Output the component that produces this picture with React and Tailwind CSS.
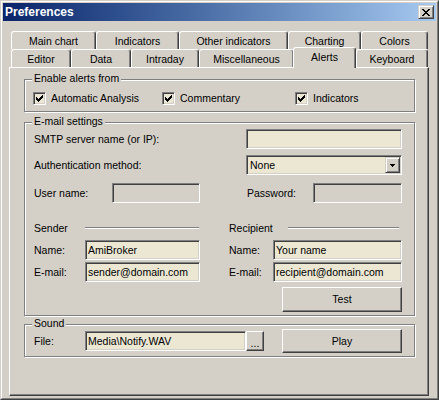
import React from "react";

const SUNKEN =
  "border border-t-[#808080] border-l-[#808080] border-b-white border-r-white shadow-[inset_1px_1px_0_#404040,inset_-1px_-1px_0_#d4d0c8]";
const RAISED =
  "border border-t-white border-l-white border-b-[#404040] border-r-[#404040] shadow-[inset_-1px_-1px_0_#808080]";
const RAISED2 =
  "border border-t-[#d4d0c8] border-l-[#d4d0c8] border-b-[#404040] border-r-[#404040] shadow-[inset_1px_1px_0_#ffffff,inset_-1px_-1px_0_#808080]";

function Field({ className = "", children, disabled }) {
  return (
    <div
      className={`h-[20px] shrink-0 flex items-center pl-[2px] whitespace-nowrap overflow-hidden ${
        disabled ? "bg-[#d4d0c8]" : "bg-[#ebe7d3]"
      } ${SUNKEN} ${className}`}
    >
      {children}
    </div>
  );
}

function Button({ className = "", children }) {
  return (
    <div
      className={`shrink-0 flex items-center justify-center bg-[#d4d0c8] ${RAISED} ${className}`}
    >
      {children}
    </div>
  );
}

function Check({ label, className = "" }) {
  return (
    <div className={`flex items-center shrink-0 ${className}`}>
      <div
        className={`w-[13px] h-[13px] bg-[#ebe7d3] flex items-center justify-center shrink-0 ${SUNKEN}`}
      >
        <svg width="7" height="7" viewBox="0 0 7 7" shapeRendering="crispEdges">
          <path
            d="M6 0h1v1h-1z M5 1h2v1h-2z M0 2h1v1h-1z M4 2h3v1h-3z M0 3h2v1h-2z M3 3h3v1h-3z M0 4h5v1h-5z M1 5h3v1h-3z M2 6h1v1h-1z"
            fill="#000"
          />
        </svg>
      </div>
      <span className="ml-[5px] whitespace-nowrap">{label}</span>
    </div>
  );
}

function Group({ label, className = "", children }) {
  return (
    <div
      className={`relative border border-[#808080] shadow-[inset_1px_1px_0_#ffffff,1px_1px_0_#ffffff] ${className}`}
    >
      <span className="absolute left-[7px] top-[-8px] px-[2px] bg-[#d4d0c8] leading-[13px] whitespace-nowrap">
        {label}
      </span>
      {children}
    </div>
  );
}

function Etched({ className = "" }) {
  return (
    <div
      className={`shrink-0 h-[2px] border-t border-t-[#808080] border-b border-b-white ${className}`}
    />
  );
}

const TAB =
  "shrink-0 h-[18px] pt-[2px] flex items-center justify-center whitespace-nowrap bg-[#d4d0c8] border-t border-l border-r border-t-white border-l-white border-r-[#404040] rounded-t-[3px] shadow-[inset_-1px_0_0_#808080]";

function Label({ className = "", children }) {
  return <span className={`shrink-0 whitespace-nowrap ${className}`}>{children}</span>;
}

export default function App() {
  return (
    <div className="w-[439px] h-[400px] bg-[#d4d0c8] font-['Liberation_Sans',Arial,sans-serif] text-[10.5px] leading-[13px] text-black border border-t-[#d4d0c8] border-l-[#d4d0c8] border-b-[#404040] border-r-[#404040] overflow-hidden">
      <div className="h-full border border-t-white border-l-white border-b-[#808080] border-r-[#808080] p-[1px]">
        {/* Title bar */}
        <div className="h-[18px] flex items-center justify-between bg-linear-to-r from-[#0a246a] to-[#a6caf0] pl-[2px] pr-[2px]">
          <span className="text-white font-bold text-[12px] leading-[14px]">Preferences</span>
          <div
            className={`w-[16px] h-[14px] bg-[#d4d0c8] flex items-center justify-center ${RAISED2}`}
          >
            <svg width="8" height="7" viewBox="0 0 8 7" shapeRendering="crispEdges">
              <path
                d="M0 0h2v1h-2z M6 0h2v1h-2z M1 1h2v1h-2z M5 1h2v1h-2z M2 2h4v1h-4z M3 3h2v1h-2z M2 4h4v1h-4z M1 5h2v1h-2z M5 5h2v1h-2z M0 6h2v1h-2z M6 6h2v1h-2z"
                fill="#000"
              />
            </svg>
          </div>
        </div>

        {/* Tabs row 1 */}
        <div className="flex ml-[8px] mt-[10px] h-[18px]">
          <div className={`${TAB} w-[85px]`}>Main chart</div>
          <div className={`${TAB} w-[83px]`}>Indicators</div>
          <div className={`${TAB} w-[109px]`}>Other indicators</div>
          <div className={`${TAB} w-[73px]`}>Charting</div>
          <div className={`${TAB} w-[67px]`}>Colors</div>
        </div>
        {/* Tabs row 2 */}
        <div className="flex items-start ml-[8px] h-[18px]">
          <div className={`${TAB} w-[60px]`}>Editor</div>
          <div className={`${TAB} w-[60px]`}>Data</div>
          <div className={`${TAB} w-[68px]`}>Intraday</div>
          <div className={`${TAB} w-[95px]`}>Miscellaneous</div>
          <div className="relative z-10 shrink-0 w-[63px] h-[21px] -ml-[1px] -mt-[2px] pb-[1px] flex items-center justify-center bg-[#d4d0c8] border-t border-l border-r border-t-white border-l-white border-r-[#404040] rounded-t-[3px] shadow-[inset_-1px_0_0_#808080]">
            Alerts
          </div>
          <div className={`${TAB} w-[72px]`}>Keyboard</div>
        </div>

        {/* Panel */}
        <div className="ml-[6px] w-[420px] h-[329px] border-t border-l border-b border-r border-t-white border-l-white border-b-[#404040] border-r-[#404040] shadow-[inset_-1px_-1px_0_#808080] pt-[11px] pl-[14px]">
          <Group label="Enable alerts from" className="w-[391px] h-[33px]">
            <div className="flex items-center h-[13px] mt-[12px] ml-[8px]">
              <Check label="Automatic Analysis" className="w-[129px]" />
              <Check label="Commentary" className="w-[133px]" />
              <Check label="Indicators" />
            </div>
          </Group>

          <Group label="E-mail settings" className="w-[391px] h-[194px] mt-[10px]">
            <div className="pl-[9px]">
              <div className="flex items-center h-[20px] mt-[6px]">
                <Label className="w-[212px]">SMTP server name (or IP):</Label>
                <Field className="w-[156px]" />
              </div>
              <div className="flex items-center h-[20px] mt-[6px]">
                <Label className="w-[212px]">Authentication method:</Label>
                <div
                  className={`w-[156px] h-[20px] shrink-0 bg-[#ebe7d3] flex items-center justify-between pl-[3px] ${SUNKEN}`}
                >
                  <span>None</span>
                  <div
                    className={`w-[15px] h-[16px] mr-[1px] bg-[#d4d0c8] flex items-center justify-center ${RAISED2}`}
                  >
                    <svg width="5" height="3" viewBox="0 0 5 3" shapeRendering="crispEdges">
                      <path d="M0 0h5v1h-1v1h-1v1h-1v-1h-1v-1h-1z" fill="#000" />
                    </svg>
                  </div>
                </div>
              </div>
              <div className="flex items-center h-[20px] mt-[8px]">
                <Label className="w-[78px]">User name:</Label>
                <Field className="w-[88px]" disabled />
                <Label className="w-[66px] ml-[47px]">Password:</Label>
                <Field className="w-[89px]" disabled />
              </div>
              <div className="flex items-center h-[14px] mt-[18px]">
                <Label className="w-[51px]">Sender</Label>
                <Etched className="w-[114px]" />
                <Label className="w-[59px] ml-[30px]">Recipient</Label>
                <Etched className="w-[111px]" />
              </div>
              <div className="flex items-center h-[20px] mt-[5px]">
                <Label className="w-[51px]">Name:</Label>
                <Field className="w-[115px]">AmiBroker</Field>
                <Label className="w-[44px] ml-[29px]">Name:</Label>
                <Field className="w-[129px]">Your name</Field>
              </div>
              <div className="flex items-center h-[20px] mt-[2px]">
                <Label className="w-[51px]">E-mail:</Label>
                <Field className="w-[115px]">sender@domain.com</Field>
                <Label className="w-[44px] ml-[29px]">E-mail:</Label>
                <Field className="w-[129px]">recipient@domain.com</Field>
              </div>
              <div className="flex items-center mt-[5px]">
                <Button className="ml-[248px] w-[120px] h-[25px]">Test</Button>
              </div>
            </div>
          </Group>

          <Group label="Sound" className="w-[391px] h-[33px] mt-[8px]">
            <div className="pl-[9px] flex items-center h-[24px] mt-[4px]">
              <Label className="w-[51px]">File:</Label>
              <Field className="w-[161px]">{"Media\\Notify.WAV"}</Field>
              <Button className="w-[18px] h-[20px] items-end pb-[3px]">
                <span className="leading-[8px]">...</span>
              </Button>
              <Button className="ml-[18px] w-[120px] h-[24px]">Play</Button>
            </div>
          </Group>
        </div>
      </div>
    </div>
  );
}
